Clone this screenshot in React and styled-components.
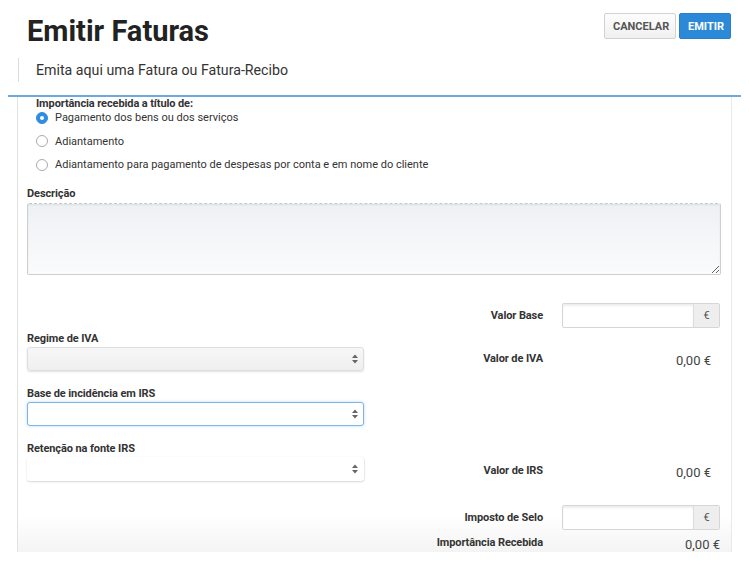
import React from 'react';
import styled, { createGlobalStyle } from 'styled-components';

const Global = createGlobalStyle`
  html, body { margin: 0; padding: 0; background: #fff; }
  body { font-family: Roboto, "Liberation Sans", sans-serif; color: #333; }
  * { box-sizing: border-box; }
`;

const Page = styled.div`
  width: 750px;
  height: 568px;
  overflow: hidden;
  background: #fff;
`;

const HeaderRow = styled.div`
  display: flex;
  justify-content: space-between;
  align-items: flex-start;
  padding: 13px 19px 0 27px;
`;

const Title = styled.h1`
  margin: 0;
  font-size: 29px;
  line-height: 36px;
  font-weight: 700;
  color: #222;
`;

const Buttons = styled.div`
  display: flex;
  gap: 3px;
`;

const Button = styled.button`
  height: 26px;
  padding: 0 8px;
  font-family: Roboto, "Liberation Sans", sans-serif;
  font-size: 11px;
  font-weight: 700;
  border-radius: 2px;
  cursor: pointer;
  color: ${p => (p.primary ? '#fff' : '#555')};
  background: ${p => (p.primary ? '#2b89d8' : 'linear-gradient(#fdfdfd, #f0f0f0)')};
  border: 1px solid ${p => (p.primary ? '#2a7fc8' : '#d2d2d2')};
  width: ${p => p.w}px;
`;

const Subtitle = styled.div`
  margin: 9px 0 0 18px;
  border-left: 1px solid #dcdcdc;
  height: 24px;
  padding-left: 17px;
  font-size: 14.2px;
  line-height: 24px;
  color: #333;
`;

const Divider = styled.div`
  margin: 13px 9px 0 8px;
  height: 2px;
  background: #6aaae0;
`;

const Panel = styled.div`
  margin: 0 18px 0 17px;
  height: 455px;
  border-left: 1px solid #e2e2e2;
  border-right: 1px solid #e9e9e9;
  padding: 0 9px 0 9px;
  background: linear-gradient(to bottom, #fff calc(100% - 36px), #f4f4f4);
`;

const Label = styled.div`
  font-size: 11px;
  font-weight: 700;
  line-height: 14px;
  color: #333;
  letter-spacing: -0.1px;
`;

const RadioGroup = styled.div`
  padding-left: 9px;
`;

const GroupLabel = styled(Label)`
  line-height: 14px;
  margin-bottom: -5px;
`;

const RadioRow = styled.label`
  display: flex;
  align-items: center;
  gap: 7px;
  height: 23.5px;
  font-size: 11px;
  color: #333;
`;

const RadioDot = styled.span`
  width: 12px;
  height: 12px;
  border-radius: 50%;
  flex: none;
  background: ${p => (p.checked ? '#2f8ce0' : '#fff')};
  border: 1px solid ${p => (p.checked ? '#2f8ce0' : '#aaa')};
  display: flex;
  align-items: center;
  justify-content: center;
  &::after {
    content: '';
    width: 4px;
    height: 4px;
    border-radius: 50%;
    background: ${p => (p.checked ? '#fff' : 'transparent')};
  }
`;

const DescLabel = styled(Label)`
  margin-top: 10px;
`;

const TextArea = styled.textarea`
  display: block;
  width: 694px;
  height: 72px;
  margin-top: 2px;
  border: 1px solid #cfcfcf;
  border-top: 1px dashed #c9c9c9;
  border-radius: 2px;
  background: linear-gradient(#eef1f4, #fafbfc);
  box-shadow: inset 0 1px 2px rgba(0, 0, 0, 0.08);
`;

const Columns = styled.div`
  display: flex;
  gap: 11px;
  margin-top: 28px;
`;

const LeftCol = styled.div`
  width: 337px;
  padding-top: 29px;
`;

const Field = styled.div`
  margin-bottom: 16px;
`;

const SelectBox = styled.div`
  margin-top: 1px;
  height: 24px;
  border-radius: 3px;
  display: flex;
  align-items: center;
  justify-content: flex-end;
  padding-right: 5px;
  background: ${p => (p.variant === 'flat' || p.variant === 'focus' ? '#fff' : 'linear-gradient(#f7f7f7, #efefef)')};
  border: 1px solid ${p => (p.variant === 'focus' ? '#7eb6e6' : p.variant === 'flat' ? 'transparent' : '#dedede')};
  box-shadow: ${p =>
    p.variant === 'focus'
      ? '0 0 3px rgba(102,175,233,0.5)'
      : p.variant === 'flat'
      ? '0 1px 2px rgba(0,0,0,0.16), 1px 0 1px rgba(0,0,0,0.05)'
      : '0 1px 2px rgba(0,0,0,0.12)'};
`;

const Arrows = () => (
  <svg width="6" height="10" viewBox="0 0 6 10">
    <path d="M0 4 L3 0.5 L6 4 Z" fill="#666" />
    <path d="M0 6 L3 9.5 L6 6 Z" fill="#666" />
  </svg>
);

const RightCol = styled.div`
  width: 346px;
`;

const Row = styled.div`
  display: grid;
  grid-template-columns: 168px 158px;
  column-gap: 19px;
  align-items: center;
  height: 25px;
  margin-top: ${p => p.mt || 0}px;
`;

const RightLabel = styled(Label)`
  text-align: right;
  padding-top: 2px;
`;

const Value = styled.div`
  text-align: right;
  font-size: 13px;
  color: #444;
  padding-right: ${p => p.pr}px;
  padding-top: 4px;
`;

const InputGroup = styled.div`
  display: flex;
  height: 25px;
  border: 1px solid #d6d6d6;
  border-radius: 2px;
  overflow: hidden;
`;

const Input = styled.div`
  flex: 1;
  background: #fff;
  box-shadow: inset 0 2px 2px rgba(0, 0, 0, 0.07);
`;

const Addon = styled.div`
  width: 26px;
  border-left: 1px solid #ddd;
  background: #eee;
  display: flex;
  align-items: center;
  justify-content: center;
  font-size: 11px;
  color: #555;
`;

const MoneyInput = () => (
  <InputGroup>
    <Input />
    <Addon>€</Addon>
  </InputGroup>
);

export default function App() {
  return (
    <Page>
      <Global />
      <HeaderRow>
        <Title>Emitir Faturas</Title>
        <Buttons>
          <Button w={72}>CANCELAR</Button>
          <Button primary w={52}>EMITIR</Button>
        </Buttons>
      </HeaderRow>
      <Subtitle>Emita aqui uma Fatura ou Fatura-Recibo</Subtitle>
      <Divider />
      <Panel>
        <RadioGroup>
          <GroupLabel>Importância recebida a título de:</GroupLabel>
          <RadioRow><RadioDot checked />Pagamento dos bens ou dos serviços</RadioRow>
          <RadioRow><RadioDot />Adiantamento</RadioRow>
          <RadioRow><RadioDot />Adiantamento para pagamento de despesas por conta e em nome do cliente</RadioRow>
        </RadioGroup>
        <DescLabel>Descrição</DescLabel>
        <TextArea />
        <Columns>
          <LeftCol>
            <Field>
              <Label>Regime de IVA</Label>
              <SelectBox><Arrows /></SelectBox>
            </Field>
            <Field>
              <Label>Base de incidência em IRS</Label>
              <SelectBox variant="focus"><Arrows /></SelectBox>
            </Field>
            <Field>
              <Label>Retenção na fonte IRS</Label>
              <SelectBox variant="flat"><Arrows /></SelectBox>
            </Field>
          </LeftCol>
          <RightCol>
            <Row>
              <RightLabel>Valor Base</RightLabel>
              <MoneyInput />
            </Row>
            <Row mt={18}>
              <RightLabel>Valor de IVA</RightLabel>
              <Value pr={9}>0,00 €</Value>
            </Row>
            <Row mt={87}>
              <RightLabel>Valor de IRS</RightLabel>
              <Value pr={9}>0,00 €</Value>
            </Row>
            <Row mt={22}>
              <RightLabel>Imposto de Selo</RightLabel>
              <MoneyInput />
            </Row>
            <Row>
              <RightLabel>Importância Recebida</RightLabel>
              <Value pr={0}>0,00 €</Value>
            </Row>
          </RightCol>
        </Columns>
      </Panel>
    </Page>
  );
}
